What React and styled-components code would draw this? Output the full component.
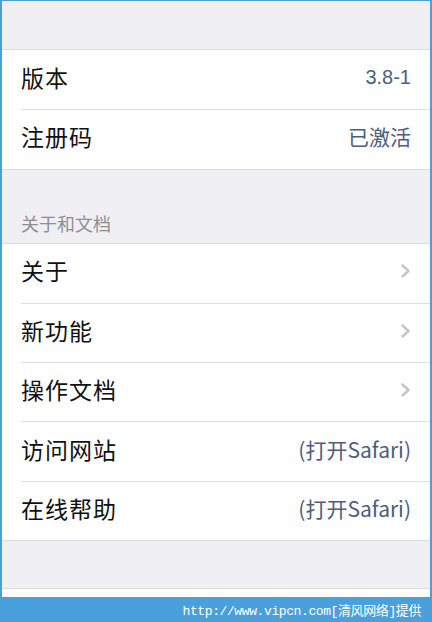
import styled, { createGlobalStyle } from 'styled-components'

const GlobalStyle = createGlobalStyle`
  html, body {
    margin: 0;
    padding: 0;
  }
  body {
    font-family: "Noto Sans CJK SC", "Liberation Sans", sans-serif;
  }
`

const Frame = styled.div`
  width: 432px;
  height: 622px;
  box-sizing: border-box;
  display: flex;
  flex-direction: column;
  background: #4a9fdd;
  padding: 1px 2px 0 2px;
  overflow: hidden;
`

const Screen = styled.div`
  flex: 1;
  display: flex;
  flex-direction: column;
  background: #efeff4;
  padding-top: 48px;
`

const Group = styled.div`
  background: #fff;
  border-top: 1px solid #dcdce0;
  border-bottom: 1px solid #dcdce0;
`

const Row = styled.div`
  height: 59.3px;
  box-sizing: border-box;
  display: flex;
  align-items: center;
  justify-content: space-between;
  margin-left: 19px;
  padding: 0 19px 5px 0;
  line-height: 1;
  border-top: ${(p) => (p.$first ? 'none' : '1px solid #e0e0e4')};
`

const Label = styled.span`
  font-size: 23px;
  color: #111;
  letter-spacing: 1px;
`

const Value = styled.span`
  font-family: "Liberation Sans", "Noto Sans CJK SC", sans-serif;
  font-size: 20px;
  color: #4e5d7c;
`

const CjkValue = styled(Value)`
  font-family: "Noto Sans CJK SC", sans-serif;
  font-size: 21px;
`

const Header = styled.div`
  height: 73px;
  box-sizing: border-box;
  padding: 0 0 11px 19px;
  display: flex;
  align-items: flex-end;
  line-height: 1;
  font-size: 18px;
  color: #8e8e93;
`

const Spacer = styled.div`
  height: 47px;
  border-bottom: 1px solid #dcdce0;
`

const Tail = styled.div`
  flex: 1;
  background: #fff;
`

const Watermark = styled.div`
  height: 25px;
  display: flex;
  align-items: center;
  justify-content: flex-end;
  padding-right: 9px;
  color: #fff;
  font-family: "Liberation Mono", "Noto Sans CJK SC", monospace;
  font-size: 13px;
  letter-spacing: -0.4px;
`

const Chevron = () => (
  <svg width="12" height="16" viewBox="0 0 12 16">
    <path d="M3.5 2.5 L9.5 8 L3.5 13.5" fill="none" stroke="#c4c4c9" strokeWidth="2.4" strokeLinecap="round" strokeLinejoin="round" />
  </svg>
)

const about = [
  { label: '关于', chevron: true },
  { label: '新功能', chevron: true },
  { label: '操作文档', chevron: true },
  { label: '访问网站', value: '(打开Safari)' },
  { label: '在线帮助', value: '(打开Safari)' },
]

export default function App() {
  return (
    <>
      <GlobalStyle />
      <Frame>
        <Screen>
          <Group>
            <Row $first>
              <Label>版本</Label>
              <Value>3.8-1</Value>
            </Row>
            <Row>
              <Label>注册码</Label>
              <CjkValue>已激活</CjkValue>
            </Row>
          </Group>
          <Header>关于和文档</Header>
          <Group>
            {about.map((item, i) => (
              <Row key={item.label} $first={i === 0}>
                <Label>{item.label}</Label>
                {item.chevron ? <Chevron /> : <CjkValue>{item.value}</CjkValue>}
              </Row>
            ))}
          </Group>
          <Spacer />
          <Tail />
        </Screen>
        <Watermark>http://www.vipcn.com[清风网络]提供</Watermark>
      </Frame>
    </>
  )
}
